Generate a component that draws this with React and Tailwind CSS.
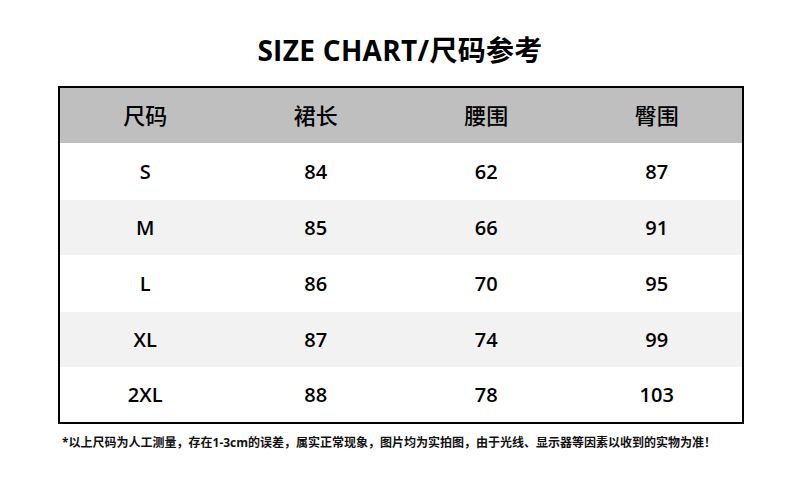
import React from 'react';

const rows = [
  { size: 'S', length: '84', waist: '62', hip: '87', bg: 'bg-white', h: 'h-[57px]' },
  { size: 'M', length: '85', waist: '66', hip: '91', bg: 'bg-[#f2f2f2]', h: 'h-[55px]' },
  { size: 'L', length: '86', waist: '70', hip: '95', bg: 'bg-white', h: 'h-[57px]' },
  { size: 'XL', length: '87', waist: '74', hip: '99', bg: 'bg-[#f2f2f2]', h: 'h-[55px]' },
  { size: '2XL', length: '88', waist: '78', hip: '103', bg: 'bg-white', h: 'h-[55px]' },
];

const font = { fontFamily: '"Open Sans", "Noto Sans CJK SC", sans-serif' };

export default function App() {
  return (
    <div className="w-[800px] h-[500px] bg-white text-black" style={font}>
      {/* Title */}
      <div className="h-[86px] pt-[35px] flex justify-center">
        <h1 className="text-[28px] leading-[30px] font-bold tracking-[0.3px]">SIZE CHART/尺码参考</h1>
      </div>

      {/* Table */}
      <div className="ml-[58px] w-[686px] border-2 border-black">
        <div className="grid grid-cols-4 h-[55px] bg-[#bfbfbf] text-[22px] font-medium items-center text-center">
          <span>尺码</span>
          <span>裙长</span>
          <span>腰围</span>
          <span>臀围</span>
        </div>
        {rows.map((r) => (
          <div key={r.size} className={`grid grid-cols-4 items-center text-center text-[20px] font-semibold ${r.bg} ${r.h}`}>
            <span>{r.size}</span>
            <span>{r.length}</span>
            <span>{r.waist}</span>
            <span>{r.hip}</span>
          </div>
        ))}
      </div>

      {/* Note */}
      <p className="mt-[11px] pl-[62px] text-[12px] leading-[16px] font-bold text-[#111]">
        *以上尺码为人工测量，存在1-3cm的误差，属实正常现象，图片均为实拍图，由于光线、显示器等因素以收到的实物为准！
      </p>
    </div>
  );
}
